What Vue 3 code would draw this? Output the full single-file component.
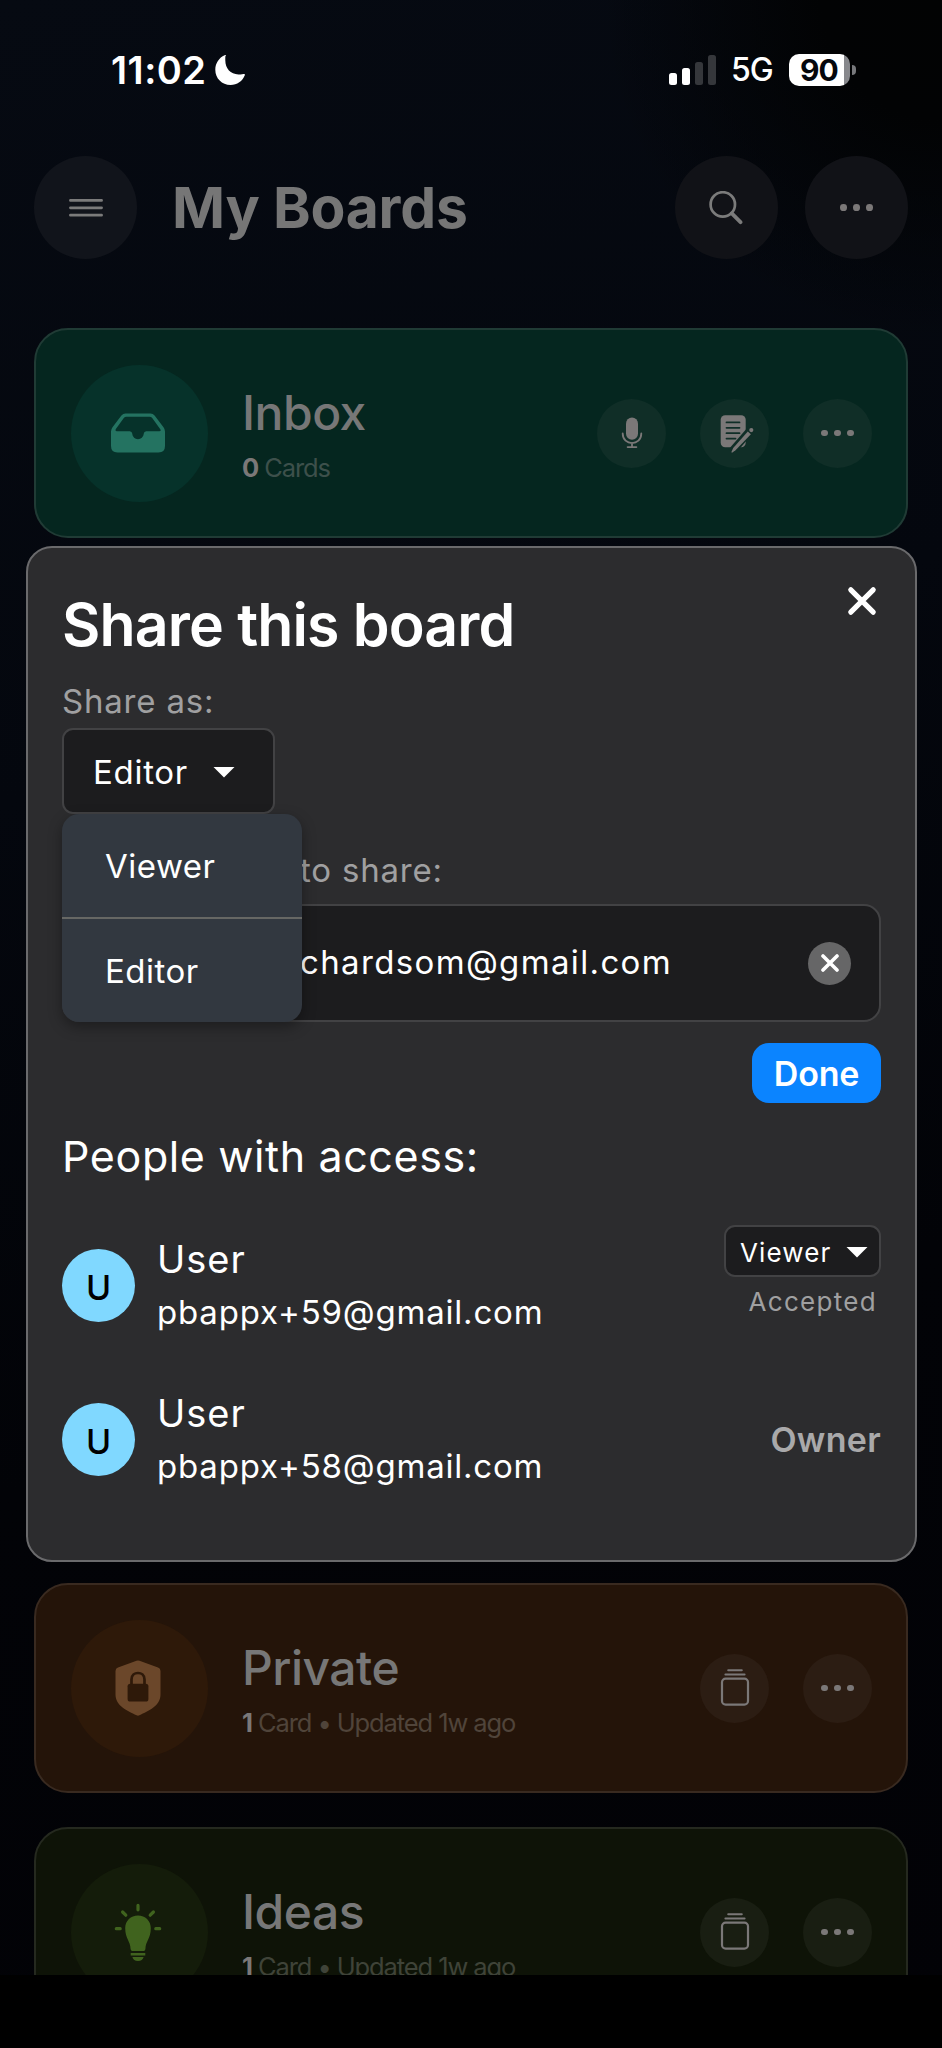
<template>
  <div class="screen">
    <header class="status-bar">
      <div class="status-left">
        <span class="time">11:02</span>
        <svg class="moon" viewBox="0 0 30 30">
          <path d="M11 0.3C10.2 1 10.3 2.4 10.3 5.3C10.3 13.6 15.6 19.4 23.4 19.4C26.4 19.4 28.2 18.9 29.2 18.9C29.9 18.9 30.1 19.5 29.8 20.3C27.6 26.2 22 30 15.6 30C6.9 30 0.3 23.5 0.3 14.8C0.3 8.3 4.1 2.6 9.6 0.3C10.4 0 10.9 0 11 0.3Z" fill="#fff" />
        </svg>
      </div>
      <div class="status-right">
        <div class="signal">
          <i v-for="(height, i) in signalBars" :key="height" :class="{ off: i > 1 }" :style="{ height: height + 'px' }"></i>
        </div>
        <span class="network">5G</span>
        <div class="battery"><span>90</span></div>
        <div class="battery-cap"></div>
      </div>
    </header>

    <nav class="nav-bar">
      <button class="nav-button">
        <svg width="34" height="20" viewBox="0 0 34 20">
          <path d="M1.4 2.4H32.6M1.4 9.8H32.6M1.4 17.2H32.6" stroke="#7b7b7b" stroke-width="2.7" stroke-linecap="round" />
        </svg>
      </button>
      <h1 class="nav-title">My Boards</h1>
      <button class="nav-button">
        <svg class="search" width="34" height="34" viewBox="0 0 34 34" fill="none" stroke="#7b7b7b" stroke-linecap="round">
          <circle cx="13.8" cy="13.4" r="12.2" stroke-width="2.7" />
          <path d="M22.8 22.4L31.5 31.2" stroke-width="3.8" />
        </svg>
      </button>
      <button class="nav-button"><span class="dots"><i></i><i></i><i></i></span></button>
    </nav>

    <main class="boards">
      <section v-for="board in boards" :key="board.name" class="board" :class="board.theme">
        <div class="board-icon">
          <svg v-if="board.theme === 'inbox'" width="54" height="40" viewBox="0 0 54 40">
            <path fill-rule="evenodd" d="M14.5 0.5H39.5Q42 0.5 43.6 2.6L52.5 14.3Q54 16.3 54 18.5V33Q54 39.5 47.5 39.5H6.5Q0 39.5 0 33V18.5Q0 16.3 1.5 14.3L10.4 2.6Q12 0.5 14.5 0.5ZM15.5 3.7Q13.8 3.7 12.8 5L4.7 16.2Q3.8 17.8 5.6 18.2H18.8Q21 18.2 21.3 20.8C21.6 24 24 26.2 27 26.2S32.4 24 32.7 20.8Q33 18.2 35.2 18.2H48.4Q50.4 18 49.3 16.2L41.2 5Q40.2 3.7 38.5 3.7Z" fill="#247361" />
          </svg>
          <svg v-else-if="board.theme === 'private'" width="46" height="56" viewBox="0 0 46 56">
            <path d="M21.5 0.7Q23 0.2 24.5 0.7L43 7.6Q45.5 8.5 45.5 11V34.5C45.5 46 33.5 50.8 24.4 55.3Q23 56 21.6 55.3C12.5 50.8 0.5 46 0.5 34.5V11Q0.5 8.5 3 7.6Z" fill="#6b472a" />
            <path d="M16.5 25V19.5C16.5 10.8 29.5 10.8 29.5 19.5V25" fill="none" stroke="#2e1909" stroke-width="2.7" />
            <rect x="12.6" y="23.7" width="20.8" height="17.8" rx="2.6" fill="#2e1909" />
          </svg>
          <svg v-else width="48" height="58" viewBox="0 0 48 58">
            <path d="M24 2.4V6.8M8.6 9L11.8 12.2M39.4 9L36.2 12.2M2.3 25.7H6.2M41.8 25.7H45.7" stroke="#40631e" stroke-width="3.2" stroke-linecap="round" />
            <path d="M24 12.6C16.8 12.6 11.2 17.9 11.2 25.2C11.2 35.8 16.4 37.8 16.6 46Q16.7 48 18.4 48H29.6Q31.3 48 31.4 46C31.6 37.8 36.8 35.8 36.8 25.2C36.8 17.9 31.2 12.6 24 12.6ZM16.7 50H31.3V52.4H16.7ZM18.4 54H29.6C29 56.5 27 58 24 58S19 56.5 18.4 54Z" fill="#40631e" />
          </svg>
        </div>
        <div class="board-text">
          <h2>{{ board.name }}</h2>
          <p><b>{{ board.count }}</b> {{ board.detail }}</p>
        </div>
        <div class="board-actions">
          <button v-if="board.theme === 'inbox'">
            <svg width="22" height="32" viewBox="0 0 22 32">
              <rect x="5" y="0.5" width="12" height="22.3" rx="6" fill="#7b7878" />
              <path d="M1.7 16.5C1.7 29.3 20.3 29.3 20.3 16.5M11 26V30M6.6 30.1H15.4" fill="none" stroke="#7b7878" stroke-width="1.8" stroke-linecap="round" />
            </svg>
          </button>
          <button v-if="board.theme === 'inbox'">
            <svg width="36" height="40" viewBox="0 0 36 40" class="note">
              <rect x="1.7" y="1.2" width="25" height="32" rx="4.5" fill="#7b7878" />
              <path d="M7.5 8.4H20.5M7.5 13.8H20.5M7.5 19.2H20.5M7.5 24.6H16.5" stroke="#102e27" stroke-width="1.8" stroke-linecap="round" />
              <path d="M32.5 15L12.5 38" stroke="#102e27" stroke-width="8" />
              <path d="M28.8 17.6L31.9 20.3L16.5 36.2L13.4 38.6Q12.3 38.8 12.5 37.7L14.2 34Z" fill="#7b7878" />
              <circle cx="32.3" cy="16.1" r="2.1" fill="#7b7878" />
            </svg>
          </button>
          <button v-else>
            <svg class="stack" width="30" height="38" viewBox="0 0 30 38" fill="none" stroke="#7b7878">
              <rect x="2" y="10.6" width="26" height="26" rx="3.6" stroke-width="2.2" />
              <path d="M5.4 6.6H24.6M8.2 2.3H21.8" stroke-width="2" stroke-linecap="round" />
            </svg>
          </button>
          <button><span class="dots"><i></i><i></i><i></i></span></button>
        </div>
      </section>
    </main>
    <footer class="home-area"></footer>

    <div class="modal">
      <svg class="close" width="30" height="30" viewBox="0 0 30 30">
        <path d="M3.8 3.8L26.2 26.2M26.2 3.8L3.8 26.2" stroke="#fff" stroke-width="5.2" stroke-linecap="round" />
      </svg>
      <h2 class="modal-title">Share this board</h2>
      <div class="label">Share as:</div>
      <div class="select-wrap">
        <div class="select" @click="open = !open">
          <span>{{ role }}</span>
          <i class="caret"></i>
        </div>
        <ul v-if="open" class="menu">
          <li v-for="option in ['Viewer', 'Editor']" :key="option" @click="choose(option)">{{ option }}</li>
        </ul>
      </div>
      <div class="label email-label">to share:</div>
      <div class="email-field">
        <span>chardsom@gmail.com</span>
        <div class="clear">
          <svg width="18" height="18" viewBox="0 0 18 18">
            <path d="M2 2L16 16M16 2L2 16" stroke="#fff" stroke-width="3.6" stroke-linecap="round" />
          </svg>
        </div>
      </div>
      <button class="done">Done</button>
      <h3 class="people-title">People with access:</h3>
      <div v-for="person in people" :key="person.email" class="person">
        <div class="avatar">U</div>
        <div class="person-text">
          <div class="person-name">{{ person.name }}</div>
          <div class="person-email">{{ person.email }}</div>
        </div>
        <div v-if="person.owner" class="owner">Owner</div>
        <div v-else class="access">
          <div class="small-select">
            <span>Viewer</span>
            <i class="caret"></i>
          </div>
          <div class="accepted">Accepted</div>
        </div>
      </div>
    </div>
  </div>
</template>

<script setup>
import {ref} from "vue";

const signalBars = [12, 17, 23, 30];

const boards = [
  {name: 'Inbox', theme: 'inbox', count: 0, detail: 'Cards'},
  {name: 'Private', theme: 'private', count: 1, detail: 'Card • Updated 1w ago'},
  {name: 'Ideas', theme: 'ideas', count: 1, detail: 'Card • Updated 1w ago'},
];

const people = [
  {name: 'User', email: 'pbappx+59@gmail.com', owner: false},
  {name: 'User', email: 'pbappx+58@gmail.com', owner: true},
];

const open = ref(true);
const role = ref('Editor');

function choose(option) {
  role.value = option;
  open.value = false;
}
</script>

<style>
body {
  background: #000;
}
</style>

<style scoped>
* {
  box-sizing: border-box;
}

.screen {
  position: relative;
  display: flex;
  flex-direction: column;
  width: 942px;
  height: 2048px;
  overflow: hidden;
  background: radial-gradient(circle at 100% 0, #020303 0, #020304 120px, transparent 340px),
    linear-gradient(165deg, #060a12 0, #04070e 35%, #020307 65%, #020206 100%);
  font-family: Inter, "Liberation Sans", sans-serif;
  color: #fff;
}

h1, h2, h3, p, ul {
  margin: 0;
  padding: 0;
  font-weight: 400;
}

button {
  display: flex;
  align-items: center;
  justify-content: center;
  border: 0;
  padding: 0;
  font-family: inherit;
  color: inherit;
}

.status-bar {
  display: flex;
  justify-content: space-between;
  height: 156px;
  padding: 50px 86px 0 111px;
}

.status-left, .status-right {
  display: flex;
  align-items: center;
  height: 40px;
}

.time {
  width: 104px;
  font-size: 38px;
  font-weight: 600;
  letter-spacing: 0.5px;
}

.moon {
  width: 30px;
  height: 30px;
}

.signal {
  display: flex;
  align-items: flex-end;
  gap: 5px;
  margin-right: 15px;
  height: 30px;
}

.signal i {
  width: 8px;
  border-radius: 2.5px;
  background: #fff;
}

.signal i.off {
  background: #35373b;
}

.network {
  width: 58px;
  font-size: 32px;
  font-weight: 500;
  line-height: 42px;
  letter-spacing: -1px;
}

.battery {
  width: 61px;
  height: 32px;
  padding-right: 1px;
  border-radius: 10px;
  background: linear-gradient(90deg, #fff 55px, #87888c 55px);
  color: #05070c;
  font-size: 30px;
  font-weight: 700;
  line-height: 32px;
  text-align: center;
  letter-spacing: -0.8px;
}

.battery-cap {
  width: 4px;
  height: 10px;
  margin-left: 2px;
  border-radius: 0 4px 4px 0;
  background: #77787b;
}

.nav-bar {
  display: flex;
  align-items: center;
  height: 103px;
  padding: 0 34px;
}

.nav-button {
  width: 103px;
  height: 103px;
  margin-left: 27px;
  border-radius: 50%;
  background: #111217;
}

.nav-button:first-child {
  margin-left: 0;
  background: #11141b;
}

.search {
  margin-right: 2px;
}

.nav-title {
  flex: 1;
  margin-left: 35px;
  font-size: 57px;
  font-weight: 700;
  letter-spacing: -0.2px;
  color: #767676;
}

.dots {
  display: flex;
  gap: 6.6px;
}

.dots i {
  width: 6.7px;
  height: 6.7px;
  border-radius: 50%;
  background: #7b7878;
}

.boards {
  height: 1716px;
  padding: 69px 34px 0;
  overflow: hidden;
}

.board {
  display: flex;
  align-items: center;
  height: 210px;
  margin-bottom: 34px;
  padding: 0 34px 0 35px;
  border: 2px solid #203b35;
  border-radius: 34px;
  background: #05261f;
}

.board.inbox {
  margin-bottom: 1045px;
}

.board.private {
  border-color: #392a20;
  background: #241409;
}

.board.ideas {
  border-color: #25291f;
  background: #0e1307;
}

.board-icon {
  display: flex;
  align-items: center;
  justify-content: center;
  width: 137px;
  height: 137px;
  margin-right: 34px;
  padding: 0 3px 1px 0;
  border-radius: 50%;
  background: #06322a;
}

.private .board-icon {
  background: #2e1909;
}

.ideas .board-icon {
  background: #141c0a;
}

.board-text {
  flex: 1;
  padding-top: 3px;
}

.board-text h2 {
  font-size: 48px;
  font-weight: 500;
  line-height: 64px;
  letter-spacing: -0.5px;
  color: #777;
}

.board-text p {
  margin-top: 3px;
  font-size: 25.5px;
  line-height: 40px;
  letter-spacing: -1.1px;
  color: #3d504b;
}

.private .board-text p {
  color: #50443a;
}

.ideas .board-text p {
  color: #3f4338;
}

.board-text b {
  font-weight: 700;
  color: #7b7878;
}

.board-actions {
  display: flex;
  gap: 34px;
}

.board-actions button {
  width: 69px;
  height: 69px;
  border-radius: 50%;
  background: #102e27;
}

.private .board-actions button {
  background: #2c1d13;
}

.ideas .board-actions button {
  background: #191e12;
}

.note {
  margin: 2px 0 0 4px;
}

.stack {
  margin-bottom: 2px;
}

.home-area {
  flex: 1;
  background: #000;
}

.modal {
  position: absolute;
  top: 546px;
  left: 26px;
  width: 891px;
  height: 1016px;
  padding: 40px 34px 0;
  border: 2px solid #6a6a6c;
  border-radius: 26px;
  background: #2c2c2e;
}

.close {
  position: absolute;
  top: 38px;
  right: 38px;
}

.modal-title {
  font-size: 59px;
  font-weight: 600;
  line-height: 73px;
  letter-spacing: -0.85px;
}

.label {
  margin-top: 18px;
  font-size: 33px;
  line-height: 44px;
  letter-spacing: 0.8px;
  color: #a0a0a1;
}

.select-wrap {
  position: relative;
  margin-top: 5px;
}

.select {
  display: flex;
  align-items: center;
  justify-content: space-between;
  width: 213px;
  height: 86px;
  padding: 2px 38px 0 29px;
  border: 2px solid #424244;
  border-radius: 11px;
  background: #1c1c1e;
  font-size: 33px;
  letter-spacing: 0.7px;
}

.caret {
  width: 22px;
  height: 11px;
  background: #fff;
  clip-path: polygon(0 0, 100% 0, 50% 100%);
}

.menu {
  position: absolute;
  top: 86px;
  left: 0;
  z-index: 2;
  width: 240px;
  border-radius: 17px;
  background: #323840;
  box-shadow: 0 5px 14px rgba(0, 0, 0, 0.35);
  list-style: none;
}

.menu li {
  height: 103px;
  padding-left: 43px;
  font-size: 33px;
  line-height: 104px;
  letter-spacing: 0.5px;
}

.menu li + li {
  height: 105px;
  border-top: 2px solid #666764;
}

.email-label {
  margin-top: 34px;
  padding-left: 238px;
}

.email-field {
  display: flex;
  align-items: center;
  justify-content: space-between;
  height: 118px;
  margin-top: 12px;
  padding: 0 28px 2px 236px;
  border: 2px solid #424244;
  border-radius: 17px;
  background: #1c1c1e;
  font-size: 33px;
  letter-spacing: 1.35px;
}

.clear {
  display: flex;
  align-items: center;
  justify-content: center;
  width: 43px;
  height: 43px;
  margin-top: 2px;
  border-radius: 50%;
  background: #666667;
}

.done {
  width: 129px;
  height: 60px;
  margin: 21px 0 0 auto;
  border-radius: 17px;
  background: #0b84ff;
  font-size: 34px;
  font-weight: 600;
  letter-spacing: -0.2px;
  padding-top: 1px;
}

.people-title {
  margin: 25px 0 24px;
  font-size: 43px;
  line-height: 56px;
  letter-spacing: 0.6px;
}

.person {
  display: flex;
  align-items: center;
  height: 154px;
}

.avatar {
  width: 73px;
  height: 73px;
  margin-right: 22px;
  border-radius: 50%;
  background: #80d8ff;
  color: #000;
  font-size: 34px;
  font-weight: 500;
  line-height: 77px;
  text-align: center;
}

.person-text {
  flex: 1;
  padding-top: 2px;
  line-height: 53px;
}

.person-name {
  font-size: 38px;
  letter-spacing: 1px;
}

.person-email {
  font-size: 33px;
  letter-spacing: 0.8px;
}

.access {
  margin-bottom: 26px;
  text-align: right;
}

.small-select {
  display: flex;
  align-items: center;
  justify-content: space-between;
  width: 157px;
  height: 52px;
  padding: 2px 11px 0 14px;
  border: 2px solid #424244;
  border-radius: 11px;
  background: #1c1c1e;
  font-size: 26px;
  letter-spacing: 1.1px;
}

.accepted {
  margin-top: 8px;
  padding-right: 4px;
  font-size: 26px;
  line-height: 34px;
  letter-spacing: 1.3px;
  color: #a0a0a1;
}

.owner {
  font-size: 34px;
  font-weight: 600;
  letter-spacing: 0.3px;
  color: #a9a9aa;
}
</style>
